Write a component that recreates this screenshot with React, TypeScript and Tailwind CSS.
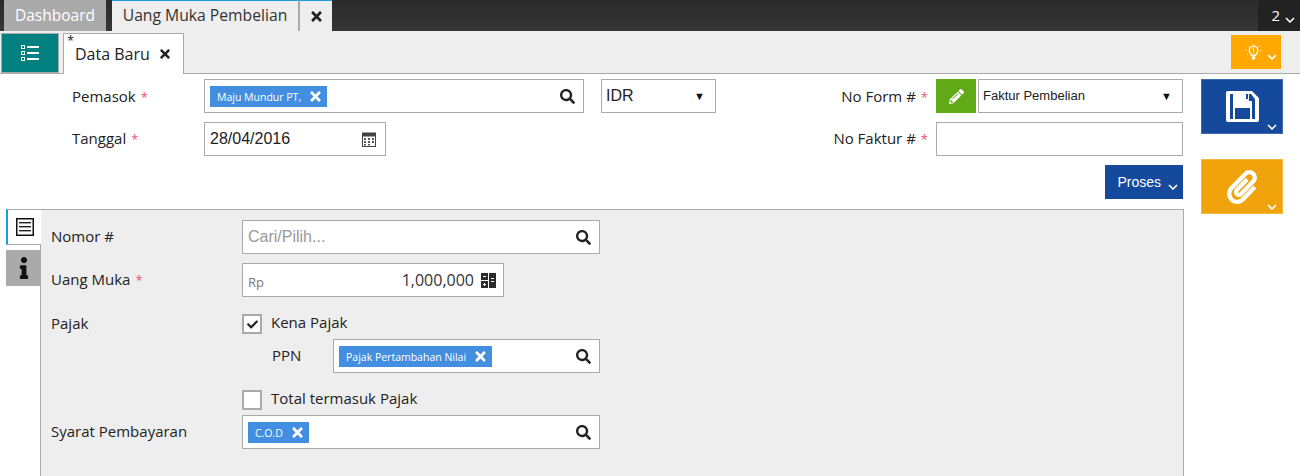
import { ReactNode } from "react";
import { FaCheck, FaInfo, FaPaperclip, FaPencilAlt, FaSearch, FaTimes } from "react-icons/fa";

const sans = "font-['Open_Sans',sans-serif]";
const arial = "font-['Liberation_Sans',Arial,sans-serif]";

function Caret({ className = "" }: { className?: string }) {
  return (
    <svg width="10" height="6" viewBox="0 0 10 6" className={className}>
      <polyline points="1,1 5,5 9,1" fill="none" stroke="#fff" strokeWidth="1.6" />
    </svg>
  );
}

function Star() {
  return <span className="text-[#f0506e] text-[13px] ml-[5px]">*</span>;
}

function Tag({ label }: { label: string }) {
  return (
    <span className="flex items-center gap-[7px] h-[21px] bg-[#428ee0] text-white text-[10.5px] leading-[19px] pl-[7px] pr-[4px]">
      <span className="pt-[2px]">{label}</span>
      <FaTimes size={15} />
    </span>
  );
}

function SearchBox({ width, children }: { width: string; children?: ReactNode }) {
  return (
    <div className={`flex items-center h-[34px] ${width} border border-[#aaa] bg-white pl-[5px] pr-[8px]`}>
      <div className="flex-1 flex items-center">{children}</div>
      <FaSearch size={15} className="text-[#222]" />
    </div>
  );
}

function Select({ width, label, textClass }: { width: string; label: string; textClass: string }) {
  return (
    <div className={`flex items-center h-[34px] ${width} border border-[#aaa] bg-white pl-[4px] pr-[10px] ${arial}`}>
      <span className={`flex-1 text-[#222] ${textClass}`}>{label}</span>
      <span className="text-[11px] text-[#111]">▼</span>
    </div>
  );
}

function CalendarIcon() {
  return (
    <svg width="14" height="15" viewBox="0 0 14 15">
      <rect x="0.5" y="1" width="13" height="13.5" fill="#fff" stroke="#444" />
      <rect x="0" y="1" width="14" height="3.5" fill="#444" />
      <rect x="2" y="6" width="2" height="2" fill="#555" />
      <rect x="6" y="6" width="2" height="2" fill="#555" />
      <rect x="10" y="6" width="2" height="2" fill="#555" />
      <rect x="2" y="9" width="2" height="2" fill="#555" />
      <rect x="6" y="9" width="2" height="2" fill="#555" />
      <rect x="10" y="9" width="2" height="2" fill="#555" />
      <rect x="2" y="12" width="2" height="1.5" fill="#555" />
      <rect x="6" y="12" width="2" height="1.5" fill="#555" />
    </svg>
  );
}

function CalcIcon() {
  return (
    <svg width="15" height="15" viewBox="0 0 15 15">
      <rect x="0" y="0" width="7" height="7" fill="#2b2b2b" />
      <rect x="8" y="0" width="7" height="15" fill="#2b2b2b" />
      <rect x="0" y="8" width="7" height="7" fill="#2b2b2b" />
      <rect x="2" y="3" width="3" height="1" fill="#fff" />
      <rect x="2" y="11" width="3" height="1" fill="#fff" />
      <rect x="3" y="10" width="1" height="3" fill="#fff" />
      <rect x="10" y="5" width="3" height="1" fill="#fff" />
      <rect x="10" y="8" width="3" height="1" fill="#fff" />
    </svg>
  );
}

function ListIcon() {
  return (
    <svg width="18" height="18" viewBox="0 0 18 18" fill="#fff">
      <path d="M0 1h4v4H0V1zm1 1v2h2V2H1zM0 7h4v4H0V7zm1 1v2h2V8H1zM0 13h4v4H0v-4zm1 1v2h2v-2H1z" fillRule="evenodd" />
      <rect x="6" y="2" width="12" height="2" />
      <rect x="6" y="8" width="12" height="2" />
      <rect x="6" y="14" width="12" height="2" />
    </svg>
  );
}

function DocIcon() {
  return (
    <svg width="18" height="18" viewBox="0 0 18 18">
      <rect x="0.75" y="0.75" width="16.5" height="16.5" fill="none" stroke="#111" strokeWidth="1.5" />
      <rect x="3" y="4" width="12" height="1.4" fill="#222" />
      <rect x="3" y="8" width="12" height="1.4" fill="#222" />
      <rect x="3" y="12" width="12" height="1.4" fill="#222" />
    </svg>
  );
}

function SaveIcon() {
  return (
    <svg width="33" height="31" viewBox="0 0 33 31" fill="#fff">
      <path
        fillRule="evenodd"
        d="M2 0H26L33 7V29a2 2 0 0 1-2 2H2a2 2 0 0 1-2-2V2a2 2 0 0 1 2-2z
           M4 3H7V28H4z
           M23 3H25L29 8V28H26V10H23z
           M20 3H22V8H20z
           M9 17H24V28H9z"
      />
    </svg>
  );
}

function BulbIcon() {
  return (
    <svg width="17" height="17" viewBox="0 0 20 20" fill="none" stroke="#fff">
      <path d="M7.5 13.5c0-2-2.5-2.5-2.5-6a5 5 0 0 1 10 0c0 3.500-2.500 4-2.500 6z" strokeWidth="1.5" />
      <rect x="8" y="14.500" width="4" height="3.500" fill="#fff" stroke="none" />
      <rect x="9.300" y="4" width="1.400" height="5" fill="#fff" stroke="none" />
      <rect x="9.300" y="10" width="1.400" height="1.500" fill="#fff" stroke="none" />
      <path d="M10 0v1M3 2l1 1M17 2l-1 1M0.500 7.500h1.500M18 7.500h1.500M2.500 12.500l1-.8M17.500 12.500l-1-.8" strokeWidth="1" />
    </svg>
  );
}

function Checkbox({ checked }: { checked?: boolean }) {
  return (
    <span className="flex items-center justify-center w-[20px] h-[20px] border-2 border-[#aaa] bg-white">
      {checked && <FaCheck size={11} className="text-[#222]" />}
    </span>
  );
}

function PanelRow({ label, star, children }: { label: string; star?: boolean; children: ReactNode }) {
  return (
    <div className="flex items-center">
      <span className="w-[201px] pl-[10px] pb-[2px] text-[15px] leading-[18px] text-[#222]">
        {label}
        {star && <Star />}
      </span>
      {children}
    </div>
  );
}

export default function App() {
  return (
    <div className={`flex flex-col w-[1300px] h-[476px] overflow-hidden bg-white text-[#222] ${sans}`}>
      {/* top tabs */}
      <div className="flex h-[31px] shrink-0 bg-gradient-to-b from-[#2b2b2b] to-[#363636]">
        <div className="flex items-center justify-center w-[102px] ml-[4px] bg-[#aaa] text-white text-[15.500px]">Dashboard</div>
        <div className="flex items-center justify-center w-[186px] ml-[6px] bg-[#eee] border-t border-[#1c9ce0] text-[15.700px] text-[#333]">Uang Muka Pembelian</div>
        <div className="flex items-center justify-center w-[34px] bg-[#eee] border-t border-t-[#1c9ce0] border-l-2 border-l-[#aaa]">
          <FaTimes size={15} className="text-[#222]" />
        </div>
        <div className="flex items-center justify-end gap-[5px] w-[42px] ml-auto pr-[5px] bg-[#222] text-white text-[15px]">
          2<Caret className="mt-[8px]" />
        </div>
      </div>

      {/* sub tabs */}
      <div className="flex h-[43px] shrink-0 bg-[#eee] border-b border-[#aaa] pt-[2px]">
        <div className="flex items-center justify-center w-[58px] h-[40px] ml-[1px] bg-[#008080] border border-[#aaa]">
          <ListIcon />
        </div>
        <div className="relative flex items-center gap-[8px] w-[121px] h-[41px] ml-[4px] pl-[11px] bg-white border border-b-0 border-[#aaa] text-[16px] text-[#222]">
          <span className="absolute left-[3px] top-[-3px] text-[13px]">*</span>
          Data Baru
          <FaTimes size={14} className="text-[#222]" />
        </div>
        <div className="flex items-center gap-[5px] w-[50px] h-[34px] mt-[2px] ml-auto mr-[19px] pl-[14px] bg-[#ffa800]">
          <BulbIcon />
          <Caret className="mt-[10px]" />
        </div>
      </div>

      <div className="flex flex-1 min-h-0">
        <div className="flex flex-col w-[1184px] pt-[5px]">
          {/* header form */}
          <div className="flex flex-col gap-[9px] w-[1183px] text-[15px]">
            <div className="flex items-center">
              <span className="w-[204px] pl-[72px]">Pemasok<Star /></span>
              <SearchBox width="w-[380px]">
                <Tag label="Maju Mundur PT," />
              </SearchBox>
              <div className="ml-[17px]">
                <Select width="w-[115px]" label="IDR" textClass="text-[16px]" />
              </div>
              <span className="ml-auto mr-[8px]">No Form #<Star /></span>
              <div className="flex items-center justify-center w-[40px] h-[34px] bg-[#60a917]">
                <FaPencilAlt size={15} color="#fff" />
              </div>
              <div className="ml-[2px]">
                <Select width="w-[205px]" label="Faktur Pembelian" textClass="text-[13px]" />
              </div>
            </div>
            <div className="flex items-center">
              <span className="w-[204px] pl-[72px] pb-[2px]">Tanggal<Star /></span>
              <div className={`flex items-center justify-between w-[182px] h-[34px] border border-[#aaa] pl-[5px] pr-[9px] text-[16px] ${arial}`}>
                28/04/2016
                <CalendarIcon />
              </div>
              <span className="ml-auto mr-[8px] pb-[2px]">No Faktur #<Star /></span>
              <div className="w-[247px] h-[34px] border border-[#aaa] bg-white" />
            </div>
            <div className="flex justify-end">
              <div className={`flex items-center justify-end gap-[7px] w-[78px] h-[34px] pr-[5px] bg-[#15499c] text-white text-[14px] ${arial}`}>
                Proses
                <Caret className="mt-[9px]" />
              </div>
            </div>
          </div>

          {/* detail panel */}
          <div className="flex flex-1 min-h-0 mt-[10px] ml-[6px]">
            <div className="relative z-10 flex flex-col w-[35px] -mr-[1px] shrink-0">
              <div className="flex items-center justify-center h-[36px] bg-white border-t border-[#aaa] border-b border-l-2 border-l-[#1c9ce0]">
                <DocIcon />
              </div>
              <div className="flex items-center justify-center h-[36px] mt-[5px] bg-[#aaa]">
                <FaInfo size={22} className="text-[#111]" />
              </div>
            </div>
            <div className="flex flex-col flex-1 bg-[#eee] border-t border-l border-r border-[#aaa] pt-[10px]">
              <div className="flex flex-col gap-[9px]">
                <PanelRow label="Nomor #">
                  <SearchBox width="w-[358px]">
                    <span className={`text-[16px] text-[#999] ${arial}`}>Cari/Pilih...</span>
                  </SearchBox>
                </PanelRow>
                <PanelRow label="Uang Muka" star>
                  <div className="flex items-center w-[262px] h-[34px] border border-[#aaa] bg-white pl-[5px] pr-[7px]">
                    <span className="mt-[5px] text-[13px] text-[#777]">Rp</span>
                    <span className="ml-auto mr-[7px] text-[16px] text-[#333]">1,000,000</span>
                    <CalcIcon />
                  </div>
                </PanelRow>
              </div>
              <div className="mt-[17px]">
                <PanelRow label="Pajak">
                  <Checkbox checked />
                  <span className="ml-[9px] pb-[4px] text-[15px] leading-[16px]">Kena Pajak</span>
                </PanelRow>
              </div>
              <div className="flex items-center mt-[5px] ml-[231px]">
                <span className="w-[61px] pb-[2px] text-[15px]">PPN</span>
                <SearchBox width="w-[267px]">
                  <Tag label="Pajak Pertambahan Nilai" />
                </SearchBox>
              </div>
              <div className="flex items-center mt-[17px] ml-[201px]">
                <Checkbox />
                <span className="ml-[9px] pb-[4px] text-[15px] leading-[16px]">Total termasuk Pajak</span>
              </div>
              <div className="mt-[5px]">
                <PanelRow label="Syarat Pembayaran">
                  <SearchBox width="w-[358px]">
                    <Tag label="C.O.D" />
                  </SearchBox>
                </PanelRow>
              </div>
            </div>
          </div>
        </div>

        {/* side actions */}
        <div className="flex flex-col gap-[25px] ml-[17px] pt-[5px]">
          <div className="relative flex items-center justify-center w-[82px] h-[55px] bg-[#15499c] border border-[#3d6cb0]">
            <SaveIcon />
            <Caret className="absolute right-[5px] bottom-[3px]" />
          </div>
          <div className="relative flex items-center justify-center w-[82px] h-[55px] bg-[#f0a30a] border border-[#f4b83f]">
            <FaPaperclip size={34} color="#fff" />
            <Caret className="absolute right-[5px] bottom-[3px]" />
          </div>
        </div>
      </div>
    </div>
  );
}
